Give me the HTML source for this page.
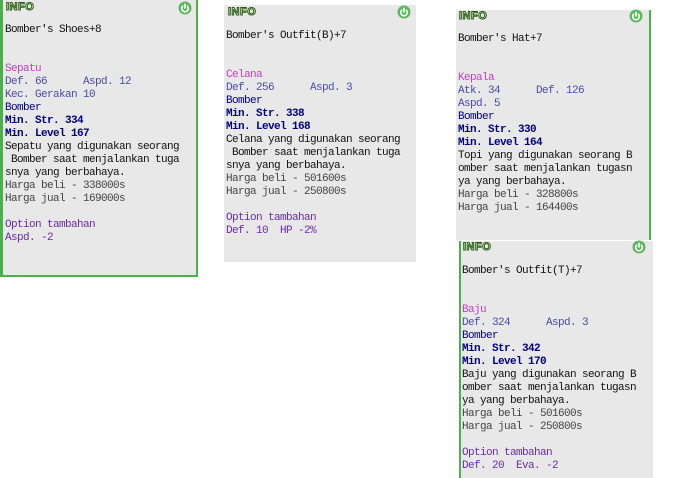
<!DOCTYPE html>
<html><head><meta charset="utf-8"><style>
html,body{margin:0;padding:0;background:#fff;width:690px;height:478px;overflow:hidden;position:relative}
.p{position:absolute;background:#e8e8e8;box-sizing:border-box}
.t{position:absolute;margin:0;font-family:"Liberation Mono","DejaVu Sans Mono",monospace;font-size:11px;letter-spacing:-0.6px;line-height:13px;color:#111;white-space:pre}
.ty{color:#c040c0}.st{color:#4a4aa8}.bo{color:#00007a;font-weight:bold}.de{color:#111}.hg{color:#444}.op{color:#6a2aa8}
.info{position:absolute;width:36px;height:11px;font-family:"Liberation Sans",sans-serif;font-weight:bold;font-size:11px;line-height:11px;letter-spacing:0.5px;color:#e4ffc8;-webkit-text-stroke:1px #2a5a1a}
.pw{position:absolute;width:14px;height:14px}
</style></head><body>

<div class="p" style="left:0;top:0;width:198px;height:277px;border-left:3px solid #4caf4c;border-right:2px solid #4caf4c;border-bottom:2px solid #4caf4c"></div>
<div class="p" style="left:224px;top:5px;width:192px;height:257px"></div>
<div class="p" style="left:456px;top:10px;width:195px;height:230px;border-right:2px solid #4caf4c"></div>
<div class="p" style="left:459px;top:241px;width:194px;height:237px;border-left:2px solid #4caf4c"></div>

<div class="info" style="left:6px;top:2px">INFO</div>
<div class="info" style="left:228px;top:7px">INFO</div>
<div class="info" style="left:459px;top:11px">INFO</div>
<div class="info" style="left:463px;top:242px">INFO</div>

<svg class="pw" style="left:178px;top:1px" viewBox="0 0 14 14"><circle cx="7" cy="7" r="6.5" fill="#5cb85c"/><path d="M4.6 5.2A3.3 3.3 0 1 0 9.4 5.2M7 3.3V7" stroke="#fff" stroke-width="1.6" fill="none" stroke-linecap="round"/></svg>
<svg class="pw" style="left:397px;top:5px" viewBox="0 0 14 14"><circle cx="7" cy="7" r="6.5" fill="#5cb85c"/><path d="M4.6 5.2A3.3 3.3 0 1 0 9.4 5.2M7 3.3V7" stroke="#fff" stroke-width="1.6" fill="none" stroke-linecap="round"/></svg>
<svg class="pw" style="left:629px;top:9px" viewBox="0 0 14 14"><circle cx="7" cy="7" r="6.5" fill="#5cb85c"/><path d="M4.6 5.2A3.3 3.3 0 1 0 9.4 5.2M7 3.3V7" stroke="#fff" stroke-width="1.6" fill="none" stroke-linecap="round"/></svg>
<svg class="pw" style="left:632px;top:240px" viewBox="0 0 14 14"><circle cx="7" cy="7" r="6.5" fill="#5cb85c"/><path d="M4.6 5.2A3.3 3.3 0 1 0 9.4 5.2M7 3.3V7" stroke="#fff" stroke-width="1.6" fill="none" stroke-linecap="round"/></svg>

<div class="t" style="left:5px;top:24px">Bomber's Shoes+8


<span class="ty">Sepatu</span>
<span class="st">Def. 66      Aspd. 12</span>
<span class="st">Kec. Gerakan 10</span>
<span class="bo" style="font-weight:normal">Bomber</span>
<span class="bo">Min. Str. 334</span>
<span class="bo">Min. Level 167</span>
<span class="de">Sepatu yang digunakan seorang</span>
<span class="de"> Bomber saat menjalankan tuga</span>
<span class="de">snya yang berbahaya.</span>
<span class="hg">Harga beli - 338000s</span>
<span class="hg">Harga jual - 169000s</span>

<span class="op">Option tambahan</span>
<span class="op">Aspd. -2</span></div>

<div class="t" style="left:226px;top:30px">Bomber's Outfit(B)+7


<span class="ty">Celana</span>
<span class="st">Def. 256      Aspd. 3</span>
<span class="bo" style="font-weight:normal">Bomber</span>
<span class="bo">Min. Str. 338</span>
<span class="bo">Min. Level 168</span>
<span class="de">Celana yang digunakan seorang</span>
<span class="de"> Bomber saat menjalankan tuga</span>
<span class="de">snya yang berbahaya.</span>
<span class="hg">Harga beli - 501600s</span>
<span class="hg">Harga jual - 250800s</span>

<span class="op">Option tambahan</span>
<span class="op">Def. 10  HP -2%</span></div>

<div class="t" style="left:458px;top:33px">Bomber's Hat+7


<span class="ty">Kepala</span>
<span class="st">Atk. 34      Def. 126</span>
<span class="st">Aspd. 5</span>
<span class="bo" style="font-weight:normal">Bomber</span>
<span class="bo">Min. Str. 330</span>
<span class="bo">Min. Level 164</span>
<span class="de">Topi yang digunakan seorang B</span>
<span class="de">omber saat menjalankan tugasn</span>
<span class="de">ya yang berbahaya.</span>
<span class="hg">Harga beli - 328800s</span>
<span class="hg">Harga jual - 164400s</span></div>

<div class="t" style="left:462px;top:265px">Bomber's Outfit(T)+7


<span class="ty">Baju</span>
<span class="st">Def. 324      Aspd. 3</span>
<span class="bo" style="font-weight:normal">Bomber</span>
<span class="bo">Min. Str. 342</span>
<span class="bo">Min. Level 170</span>
<span class="de">Baju yang digunakan seorang B</span>
<span class="de">omber saat menjalankan tugasn</span>
<span class="de">ya yang berbahaya.</span>
<span class="hg">Harga beli - 501600s</span>
<span class="hg">Harga jual - 250800s</span>

<span class="op">Option tambahan</span>
<span class="op">Def. 20  Eva. -2</span></div>

</body></html>
